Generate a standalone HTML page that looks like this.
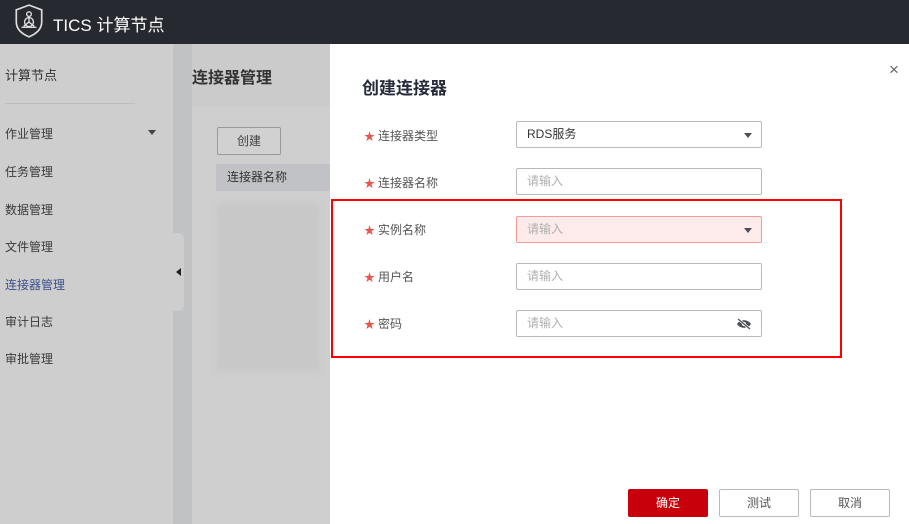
<!DOCTYPE html>
<html><head><meta charset="utf-8"><style>
*{margin:0;padding:0;box-sizing:border-box}
body{width:909px;height:524px;overflow:hidden;position:relative;font-family:"Liberation Sans","Noto Sans CJK SC",sans-serif;font-size:12px;background:#cbcbcb}
.abs{position:absolute}
.hdr{left:0;top:0;width:909px;height:44px;background:#26292f}
.side{left:0;top:44px;width:173px;height:480px;background:#cecece}
.strip{left:173px;top:44px;width:19px;height:480px;background:#c1c2c4}
.main{left:192px;top:44px;width:138px;height:480px;background:#cbcbcb}
.mi{left:5px;color:#3a3a3a;font-size:12px}
.modal{left:330px;top:44px;width:579px;height:480px;background:#fff}
.lbl{left:364px;color:#555;font-size:12px}
.lbl b{color:#e8554e;font-weight:normal;margin-right:3px;font-size:11px}
.inp{left:516px;width:246px;height:27px;border:1px solid #b8b9bd;border-radius:2px;padding-left:10px;line-height:25px;color:#b0b0b0;font-size:12px}
.arr{position:absolute;right:9px;top:11px;width:0;height:0;border-left:4.5px solid transparent;border-right:4.5px solid transparent;border-top:5px solid #4c4f55}
.btn{top:489px;width:80px;height:28px;border:1px solid #b8b9bd;border-radius:2px;text-align:center;line-height:26px;color:#555;background:#fff}
</style></head><body>
<div class="abs hdr"></div>
<svg class="abs" style="left:13px;top:3px" width="32" height="36" viewBox="0 0 30 34"><path d="M15 2 L27 6.5 L27 18 C27 25 21 29.5 15 32 C9 29.5 3 25 3 18 L3 6.5 Z" fill="none" stroke="#dcdcdc" stroke-width="1.6"/><circle cx="15" cy="10.5" r="2.2" fill="none" stroke="#dcdcdc" stroke-width="1.3"/><circle cx="15" cy="18" r="4.2" fill="none" stroke="#dcdcdc" stroke-width="1.3"/><path d="M15 12.7 V18 L10 22 M15 18 L20 22 M8 23 H22" stroke="#dcdcdc" stroke-width="1.3" fill="none"/></svg>
<div class="abs" style="left:53px;top:11px;color:#fff;font-size:17px">TICS 计算节点</div>
<div class="abs side"></div>
<div class="abs" style="left:5px;top:65px;font-size:13px;color:#333">计算节点</div>
<div class="abs" style="left:5px;top:103px;width:130px;height:1px;background:#bdbdbd"></div>
<div class="abs mi" style="top:125px">作业管理</div>
<div class="abs" style="left:148px;top:130px;border-left:4px solid transparent;border-right:4px solid transparent;border-top:5px solid #444"></div>
<div class="abs mi" style="top:163px">任务管理</div>
<div class="abs mi" style="top:201px">数据管理</div>
<div class="abs mi" style="top:238px">文件管理</div>
<div class="abs mi" style="top:276px;color:#3b4f8a">连接器管理</div>
<div class="abs mi" style="top:313px">审计日志</div>
<div class="abs mi" style="top:350px">审批管理</div>
<div class="abs strip"></div>
<div class="abs" style="left:166px;top:233px;width:18px;height:78px;background:#cecece;border-radius:0 6px 6px 0"></div>
<div class="abs" style="left:176px;top:268px;border-top:4px solid transparent;border-bottom:4px solid transparent;border-right:5px solid #222"></div>
<div class="abs main"></div>
<div class="abs" style="left:192px;top:64px;font-size:16px;font-weight:bold;color:#333">连接器管理</div>
<div class="abs" style="left:192px;top:107px;width:138px;height:417px;background:#cfcfcf"></div>
<div class="abs" style="left:217px;top:127px;width:64px;height:28px;border:1px solid #999;border-radius:2px;background:#d1d1d1;text-align:center;line-height:26px;color:#444">创建</div>
<div class="abs" style="left:216px;top:164px;width:114px;height:27px;background:#c1c2c5;padding-left:11px;line-height:27px;color:#333">连接器名称</div>
<div class="abs" style="left:216px;top:202px;width:104px;height:170px;background:#c8c8c8;filter:blur(3px)"></div>
<div class="abs modal"></div>
<div class="abs" style="left:362px;top:74px;font-size:17px;font-weight:bold;color:#252b3a">创建连接器</div>
<div class="abs" style="left:889px;top:60px;font-size:17px;color:#666">×</div>
<div class="abs lbl" style="top:127px"><b>★</b>连接器类型</div>
<div class="abs lbl" style="top:174px"><b>★</b>连接器名称</div>
<div class="abs lbl" style="top:221px"><b>★</b>实例名称</div>
<div class="abs lbl" style="top:268px"><b>★</b>用户名</div>
<div class="abs lbl" style="top:315px"><b>★</b>密码</div>
<div class="abs inp" style="top:121px;color:#333">RDS服务<span class="arr"></span></div>
<div class="abs inp" style="top:168px">请输入</div>
<div class="abs inp" style="top:216px;background:#fdeaea;border-color:#f59b98">请输入<span class="arr"></span></div>
<div class="abs inp" style="top:263px">请输入</div>
<div class="abs inp" style="top:310px">请输入
<svg style="position:absolute;right:9px;top:7px" width="16" height="12" viewBox="0 0 16 12"><path d="M1 6 C4 1 12 1 15 6 C12 11 4 11 1 6Z" fill="#4c4f55"/><circle cx="8" cy="6" r="2" fill="#fff"/><path d="M2 1 L14 11" stroke="#fff" stroke-width="2.5"/><path d="M2 1 L14 11" stroke="#4c4f55" stroke-width="1.2"/></svg></div>
<div class="abs" style="left:331px;top:199px;width:511px;height:159px;border:2px solid #f00"></div>
<div class="abs btn" style="left:628px;background:#c7000b;border-color:#c7000b;color:#fff">确定</div>
<div class="abs btn" style="left:719px">测试</div>
<div class="abs btn" style="left:810px">取消</div>
</body></html>
